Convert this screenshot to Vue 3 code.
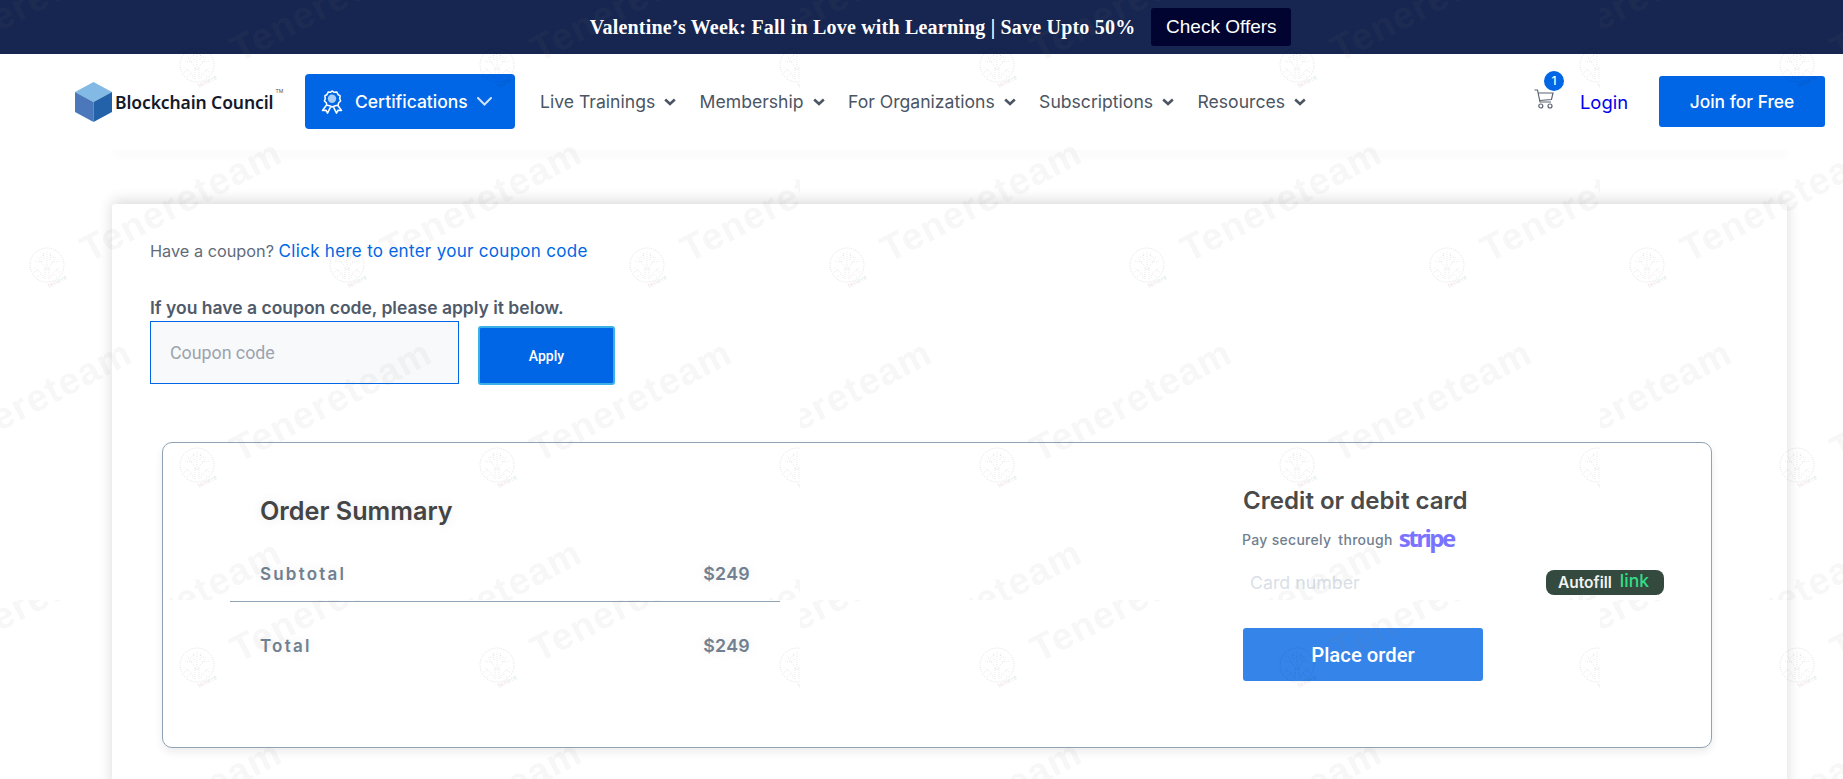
<template>
  <div class="page">
    <div class="promo">
      <span class="promo-text">Valentine’s Week: Fall in Love with Learning | Save Upto 50%</span>
      <button class="promo-btn">Check Offers</button>
    </div>

    <header class="topbar">
      <div class="brand">
        <svg class="cube" width="37" height="40" viewBox="0 0 37 40">
          <path d="M18.5 0L37 10L18.5 20L0 10Z" fill="#83b9e5" />
          <path d="M0 10L18.5 20V40L0 30Z" fill="#4a78bb" />
          <path d="M37 10L18.5 20V40L37 30Z" fill="#2361a9" />
        </svg>
        <span class="brand-name">Blockchain Council</span>
        <span class="brand-tm">TM</span>
      </div>

      <button class="cert-btn">
        <svg width="22" height="24" viewBox="0 0 22 24" fill="none">
          <path
            d="M11 1l2.3 1.3 2.6-.2 1.1 2.4 2.2 1.4-.5 2.6.9 2.5-1.9 1.8-.7 2.5-2.6.4L11 17l-2.4-1.3-2.6-.4-.7-2.5-1.9-1.8.9-2.5-.5-2.6L6 4.500l1.100-2.400 2.600.2z"
            stroke="#fff"
            stroke-width="1.5"
            stroke-linejoin="round"
          />
          <circle cx="11" cy="8.800" r="4.200" fill="#a9cdf7" />
          <path
            d="M5.500 15L1.500 20.500l3.500-.3 1.500 3 3-6M16.500 15l4 5.500-3.500-.3-1.500 3-3-6"
            stroke="#fff"
            stroke-width="1.500"
            stroke-linejoin="round"
          />
        </svg>
        <span>Certifications</span>
        <svg width="15" height="9" viewBox="0 0 15 9" fill="none">
          <path d="M1 1l6.500 6.500L14 1" stroke="#cfe2fb" stroke-width="2" stroke-linecap="round" />
        </svg>
      </button>

      <nav class="nav">
        <a v-for="item in navItems" :key="item" class="nav-item">
          {{ item }}
          <svg width="12" height="8" viewBox="0 0 12 8" fill="none">
            <path d="M1.200 1.500l4.800 4.500 4.800-4.500" stroke="#4b5563" stroke-width="2.600" />
          </svg>
        </a>
      </nav>

      <div class="topbar-right">
        <div class="cart">
          <svg width="20" height="20" viewBox="0 0 20 20" fill="none" stroke="#5b6472" stroke-width="1.200">
            <path d="M0.500 1h3l2.500 12h11" />
            <path d="M4 4h15l-1.500 6.500L5.500 11.500" />
            <circle cx="6.800" cy="17" r="2" />
            <circle cx="16" cy="17" r="2" />
          </svg>
          <span class="cart-badge">1</span>
        </div>
        <a class="login">Login</a>
        <button class="join-btn">Join for Free</button>
      </div>
    </header>
    <div class="topbar-shade"></div>

    <main class="card">
      <p class="coupon-line">Have a coupon? <a>Click here to enter your coupon code</a></p>
      <p class="coupon-label">If you have a coupon code, please apply it below.</p>
      <div class="coupon-row">
        <input class="coupon-input" placeholder="Coupon code" />
        <button class="apply-btn">Apply</button>
      </div>

      <section class="order-box">
        <div class="summary">
          <h2>Order Summary</h2>
          <div class="sum-row first">
            <span class="sum-label">Subtotal</span>
            <span class="sum-val">$249</span>
          </div>
          <div class="sum-row">
            <span class="sum-label">Total</span>
            <span class="sum-val">$249</span>
          </div>
        </div>

        <div class="payment">
          <h3>Credit or debit card</h3>
          <div class="pay-line">
            <span>Pay securely</span>
            <span>through</span>
            <b class="stripe">stripe</b>
          </div>
          <div class="card-field">
            <span class="card-ph">Card number</span>
            <span class="autofill">Autofill <i>link</i></span>
          </div>
          <button class="place-btn">Place order</button>
        </div>
      </section>
    </main>

    <svg class="watermark" width="1843" height="779">
      <defs>
        <g id="wm-logo">
          <circle r="17" fill="none" stroke="rgba(0,0,0,0.11)" stroke-width="1" stroke-dasharray="1 1" />
          <g fill="none" stroke="rgba(0,0,0,0.08)" stroke-width="1" stroke-dasharray="1 1">
            <path d="M-2 14V3M2 14V3M-4 13C-4 8-8 6-12 3M4 13C4 8 8 6 12 3" />
            <path d="M-1 5C-2 0-7-3-9-9M1 5C2 0 7-3 9-9M0 4V-14" />
            <path d="M-5-3L-13-4M5-3L13-4M-3-5L-4-13M3-5L4-13M-7-7L-2-11M7-7L2-11" />
            <path d="M-9 5L-14 8M9 5L14 8M-6 9L-10 12M6 9L10 12" />
          </g>
          <text class="wm-small" x="2" y="23" transform="rotate(-27 2 23)">tenere</text>
        </g>
      </defs>
      <svg v-for="t in tiles" :key="t.x + '-' + t.y" :x="t.x" :y="t.y" width="800" height="600">
        <g v-for="m in marks" :key="m.x + '-' + m.y" :transform="`translate(${m.x} ${m.y})`">
          <use href="#wm-logo" />
          <text class="wm-text" x="42" y="-2" transform="rotate(-27.500 42 -2)">Tenereteam</text>
        </g>
      </svg>
    </svg>
  </div>
</template>

<script setup>
const navItems = ['Live Trainings', 'Membership', 'For Organizations', 'Subscriptions', 'Resources']

// the watermark is an 800x600 tile, repeated and clipped at its edges
const tiles = []
for (let y = 0; y < 779; y += 600) {
  for (let x = 0; x < 1843; x += 800) tiles.push({ x, y })
}

const marks = []
;[65, 265, 465, 665].forEach((y, row) => {
  const xs = row % 2 ? [47, 347, 647] : [-103, 197, 497, 797]
  xs.forEach((x) => marks.push({ x, y }))
})
</script>

<style>
html,
body {
  margin: 0;
  overflow: hidden;
  background: #fff;
}
</style>

<style scoped>
* {
  box-sizing: border-box;
}

.page {
  position: relative;
  height: 779px;
  overflow: hidden;
  font-family: Inter, 'Liberation Sans', sans-serif;
  background: #fff;
}

button {
  border: none;
  cursor: pointer;
  font-family: inherit;
}

.promo {
  height: 54px;
  background: #172650;
  display: flex;
  align-items: center;
  justify-content: center;
  gap: 16px;
  padding-left: 38px;
}
.promo-text {
  font-family: 'Liberation Serif', serif;
  font-weight: 700;
  font-size: 20px;
  letter-spacing: 0.2px;
  color: #fff;
}
.promo-btn {
  width: 140px;
  height: 38px;
  background: #010431;
  color: #fff;
  border-radius: 3px;
  font-family: 'Liberation Sans', sans-serif;
  font-size: 19px;
}

.topbar {
  height: 95px;
  display: flex;
  align-items: center;
  padding: 0 18px 0 75px;
  background: #fff;
  position: relative;
  z-index: 1;
}
.brand {
  width: 230px;
  flex-shrink: 0;
  display: flex;
  align-items: center;
}
.cube {
  flex-shrink: 0;
}
.brand-name {
  margin-left: 3px;
  font-family: 'Noto Sans', sans-serif;
  font-weight: 600;
  font-size: 17.500px;
  letter-spacing: -0.1px;
  color: #121a2c;
  white-space: nowrap;
}
.brand-tm {
  margin: 6px 0 0 2px;
  font-size: 5px;
  color: #555;
  align-self: flex-start;
}

.cert-btn {
  width: 210px;
  height: 55px;
  flex-shrink: 0;
  background: #0066e6;
  color: #fff;
  border-radius: 4px;
  display: flex;
  align-items: center;
  padding-left: 16px;
  font-size: 17.500px;
  font-weight: 500;
  white-space: nowrap;
}
.cert-btn svg:first-child {
  margin-right: 12px;
}
.cert-btn svg:last-child {
  margin-left: 9px;
}

.nav {
  display: flex;
  margin-left: 25px;
}
.nav-item {
  display: flex;
  align-items: center;
  gap: 9px;
  margin-right: 23.400px;
  font-size: 17.600px;
  color: #4b5563;
  white-space: nowrap;
}

.topbar-right {
  margin-left: auto;
  display: flex;
  align-items: center;
}
.cart {
  position: relative;
  width: 20px;
  height: 20px;
  top: -3px;
  left: -1px;
}
.cart-badge {
  position: absolute;
  top: -18px;
  left: 10px;
  width: 20px;
  height: 20px;
  border-radius: 50%;
  background: #0066e6;
  color: #fff;
  font-size: 12px;
  font-weight: 500;
  display: flex;
  align-items: center;
  justify-content: center;
}
.login {
  margin-left: 25px;
  font-size: 18.400px;
  color: #0000ee;
}
.join-btn {
  margin-left: 31px;
  width: 166px;
  height: 51px;
  background: #0066e6;
  color: #fff;
  border-radius: 3px;
  font-size: 17.400px;
  font-weight: 500;
}

.topbar-shade {
  height: 1px;
  margin: -1px 56px 0 112px;
  background: #f4f4f4;
  box-shadow: 0 5px 8px rgba(0, 0, 0, 0.16);
}

.card {
  margin: 55px 56px 0 112px;
  padding: 35px 38px 80px;
  background: #fff;
  border-radius: 3px;
  box-shadow: 0 -3px 14px rgba(0, 0, 0, 0.15);
}

.coupon-line {
  margin: 0;
  font-size: 16.300px;
  line-height: 24px;
  color: #5f6b7a;
}
.coupon-line a {
  color: #0066e6;
  font-size: 17px;
  letter-spacing: 0.3px;
}
.coupon-label {
  margin: 33px 0 0;
  font-size: 17.500px;
  line-height: 24px;
  font-weight: 600;
  color: #4f5a6a;
}
.coupon-row {
  display: flex;
  align-items: flex-start;
  margin-top: 1px;
}
.coupon-input {
  width: 309px;
  height: 63px;
  padding: 0 19px;
  border: 1.500px solid #0066e6;
  background: #f8f9fa;
  outline: none;
  font-family: Roboto, sans-serif;
  font-size: 17.800px;
}
.coupon-input::placeholder {
  color: #9ca3af;
  opacity: 1;
}
.apply-btn {
  margin: 5px 0 0 19px;
  width: 137px;
  height: 59px;
  background: #0066e6;
  border: 2px solid #3bb0e6;
  border-radius: 3px;
  color: #fff;
  font-family: Roboto, sans-serif;
  font-weight: 500;
  font-size: 14px;
}

.order-box {
  margin: 57px 0 0 12px;
  width: 1550px;
  height: 306px;
  display: flex;
  background: #fff;
  border: 1px solid #8fa3b5;
  border-radius: 10px;
  box-shadow: 0 4px 8px rgba(0, 0, 0, 0.08);
}

.summary {
  width: 550px;
  margin-left: 67px;
}
.summary h2 {
  margin: 53px 0 0 30px;
  font-size: 25.200px;
  line-height: 30px;
  font-weight: 600;
  color: #444;
  text-shadow: 0 0 12px rgba(0, 0, 0, 0.1);
}
.sum-row {
  display: flex;
  justify-content: space-between;
  padding: 0 30px;
  height: 87px;
  align-items: center;
}
.sum-row.first {
  margin-top: 12px;
  height: 64px;
  padding-top: 8px;
  border-bottom: 1px solid #8fa3b5;
}
.sum-label {
  font-size: 17px;
  font-weight: 600;
  letter-spacing: 2.200px;
  color: #708090;
  text-shadow: 0 0 12px rgba(0, 0, 0, 0.1);
}
.sum-val {
  font-size: 17.800px;
  font-weight: 600;
  letter-spacing: 0.3px;
  color: #708090;
  text-shadow: 0 0 12px rgba(0, 0, 0, 0.1);
}

.payment {
  margin-left: 463px;
  width: 421px;
}
.payment h3 {
  margin: 43px 0 0;
  font-size: 24.100px;
  line-height: 30px;
  font-weight: 600;
  color: #4a4a4a;
}
.pay-line {
  display: flex;
  align-items: center;
  gap: 7px;
  margin: 9px 0 0 -1px;
  height: 28px;
  font-size: 14px;
  font-weight: 500;
  letter-spacing: 0.3px;
  color: #708090;
}
.stripe {
  margin: -3px 0 0 -1px;
  font-family: 'Open Sans', sans-serif;
  font-size: 24px;
  line-height: 28px;
  font-weight: 700;
  letter-spacing: -2.500px;
  color: #7a73ff;
}
.card-field {
  display: flex;
  align-items: center;
  justify-content: space-between;
  height: 26px;
  margin-top: 16px;
  padding-left: 7px;
}
.card-ph {
  font-size: 17.800px;
  color: #d9dfe8;
}
.autofill {
  width: 118px;
  height: 25px;
  display: flex;
  align-items: center;
  padding-left: 12px;
  gap: 8px;
  background: #344a3e;
  border-radius: 8px;
  color: #f3f3f3;
  font-size: 15.500px;
  font-weight: 600;
}
.autofill i {
  font-style: normal;
  font-weight: 500;
  font-size: 17.500px;
  color: #33dd88;
  margin-top: -3px;
}
.place-btn {
  display: block;
  margin-top: 33px;
  width: 240px;
  height: 53px;
  background: #3584e9;
  color: #fff;
  border-radius: 3px;
  font-family: Roboto, sans-serif;
  font-size: 20.300px;
  font-weight: 500;
}

.watermark {
  position: absolute;
  top: 0;
  left: 0;
  z-index: 5;
  pointer-events: none;
}
.wm-text {
  font-family: 'Liberation Sans', sans-serif;
  font-weight: 700;
  font-size: 37.500px;
  letter-spacing: 1.300px;
  fill: rgba(128, 128, 128, 0.085);
}
.wm-small {
  font-family: 'Liberation Sans', sans-serif;
  font-weight: 700;
  font-size: 7px;
  fill: rgba(0, 0, 0, 0.1);
}
</style>
